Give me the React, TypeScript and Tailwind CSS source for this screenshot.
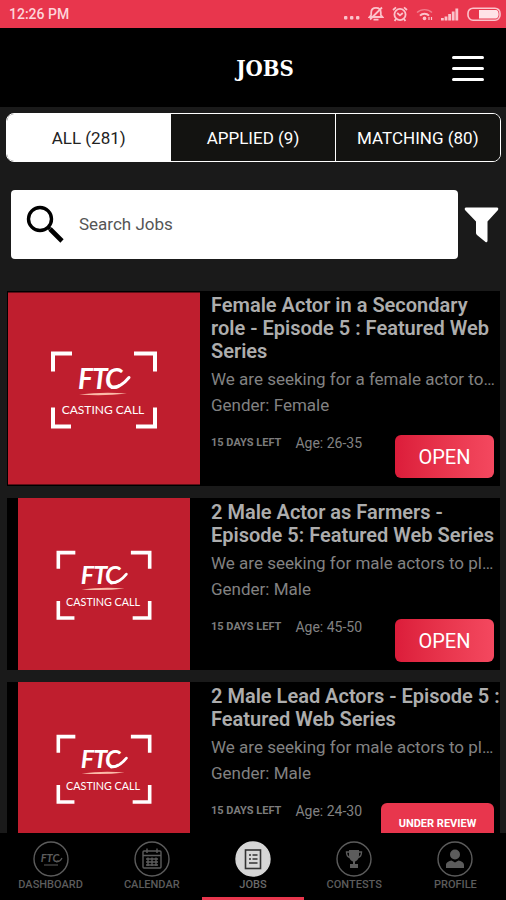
import { useState } from "react";

const tabs = ["ALL (281)", "APPLIED (9)", "MATCHING (80)"];

const jobs = [
  {
    title: "Female Actor in a Secondary role - Episode 5 : Featured Web Series",
    description: "We are seeking for a female actor to…",
    gender: "Female",
    age: "26-35",
    status: "open",
  },
  {
    title: "2 Male Actor as Farmers - Episode 5: Featured Web Series",
    description: "We are seeking for male actors to pl…",
    gender: "Male",
    age: "45-50",
    status: "open",
  },
  {
    title: "2 Male Lead Actors - Episode 5 : Featured Web Series",
    description: "We are seeking for male actors to pl…",
    gender: "Male",
    age: "24-30",
    status: "review",
  },
];

type Job = (typeof jobs)[number];

const StatusIcons = () => (
  <div className="flex items-center gap-2 text-[#fbc3cb]">
    {/* More */}
    <svg width="16" height="16" viewBox="0 0 16 16" fill="currentColor">
      <rect x="0" y="10" width="3.4" height="3.4" rx="1" />
      <rect x="6" y="10" width="3.4" height="3.4" rx="1" />
      <rect x="12" y="10" width="3.4" height="3.4" rx="1" />
    </svg>
    {/* Muted bell */}
    <svg width="16" height="16" viewBox="0 0 16 16" fill="none" stroke="currentColor" strokeWidth="1.8">
      <path d="M1.5 11 L3.2 9 V6.5 C3.2 3.4 5 1.8 8 1.8 C11 1.8 12.8 3.4 12.8 6.5 V9 L14.5 11 Z" />
      <path d="M5.5 13.6 H10.5 M2 13.5 L14 1.5" />
    </svg>
    {/* Alarm */}
    <svg width="16" height="16" viewBox="0 0 16 16" fill="none" stroke="currentColor" strokeWidth="1.8">
      <circle cx="8" cy="8.5" r="5.6" />
      <path d="M5.2 7 L8 9.4 L10.8 7 M1 4 L4 1.4 M15 4 L12 1.4 M4 13 L2.6 15 M12 13 L13.4 15" />
    </svg>
    {/* Wifi */}
    <svg width="17" height="16" viewBox="0 0 17 16" fill="none" stroke="currentColor">
      <path d="M1 6.6 C5 2.6 12 2.6 16 6.6" strokeWidth="1.4" opacity="0.5" />
      <path d="M4 9.6 C6.4 7.2 10.6 7.2 13 9.6" strokeWidth="2" />
      <circle cx="8.5" cy="12.4" r="1.8" fill="currentColor" stroke="none" />
      <path d="M13 11 V14 M15.5 11 V14" strokeWidth="1.2" />
    </svg>
    {/* Signal */}
    <svg width="18" height="16" viewBox="0 0 18 16" fill="currentColor">
      <rect x="0" y="12" width="2.8" height="2.5" />
      <rect x="3.6" y="10.5" width="2.8" height="4" />
      <rect x="7.2" y="8" width="2.8" height="6.5" />
      <rect x="10.8" y="5.5" width="2.8" height="9" />
      <rect x="14.4" y="2.5" width="2.8" height="12" />
    </svg>
    {/* Battery */}
    <svg width="34" height="16" viewBox="0 0 34 16">
      <rect x="1" y="2.2" width="32" height="12" rx="5" fill="none" stroke="currentColor" strokeWidth="1.6" />
      <path d="M12 4 H29 C32.5 4 32.5 12.4 29 12.4 H12 Z" fill="#ffe3e7" />
    </svg>
  </div>
);

const CastingLogo = () => (
  <svg viewBox="0 0 192 192" className="h-0 min-h-full w-full" role="img" aria-label="FTC Casting Call">
    <rect width="192" height="192" fill="#bf1e2e" />
    <path
      d="M45 79 V61 H64 M126 61 H147 V79 M45 115 V134 H63 M128 134 H147 V115"
      fill="none"
      stroke="#fff"
      strokeWidth="4"
    />
    <text y="96" x="70 84 97" fill="#fff" className="font-['Lato'] text-[28px] font-bold italic">
      FTC
    </text>
    {/* Flourish and underline */}
    <path d="M104 95 C111 95 117 90 121 85" fill="none" stroke="#fff" strokeWidth="3" strokeLinecap="round" />
    <path d="M71 102 Q95 99 119 101 Q95 104 71 102 Z" fill="#fbb9a8" />
    <text x="95" y="121" textAnchor="middle" fill="#fff" className="font-['Lato'] text-[12px]">
      CASTING CALL
    </text>
  </svg>
);

const JobCard = ({ job }: { job: Job }) => (
  <article className="flex shrink-0 bg-black">
    <div className="flex w-[194px] shrink-0 px-px">
      <CastingLogo />
    </div>
    <div className="flex min-w-0 flex-1 flex-col pt-[3px] pb-2 pl-[10px]">
      <h2 className="-mr-1 text-[20px] leading-[23px] font-semibold text-[#adadad]">{job.title}</h2>
      <p className="mt-[3px] text-[17px] leading-[26px] whitespace-nowrap text-[#828282]">{job.description}</p>
      <p className="text-[17px] leading-[26px] text-[#828282]">Gender: {job.gender}</p>
      <div className="mt-[17px] flex items-start pr-[6px]">
        <span className="text-[11px] leading-4 font-bold whitespace-nowrap text-[#7c7c7c]">15 DAYS LEFT</span>
        <span className="ml-[14px] text-[14px] leading-4 whitespace-nowrap text-[#828282]">Age: {job.age}</span>
        {job.status === "open" ? (
          <button className="ml-auto h-[43px] w-[99px] rounded-md bg-linear-to-r from-[#dc1c3a] to-[#f4485f] text-[20px] text-white">
            OPEN
          </button>
        ) : (
          <button className="ml-auto h-[43px] w-[113px] rounded-md bg-[#e8364d] text-[11px] font-bold text-white">
            UNDER REVIEW
          </button>
        )}
      </div>
    </div>
  </article>
);

const navItems = [
  {
    label: "DASHBOARD",
    icon: (
      <>
        <text x="17" y="21" textAnchor="middle" fill="currentColor" className="font-['Lato'] text-[11px] font-bold italic">
          FTC
        </text>
        <path d="M23 21 C26 21 28 19 29 17 M11 24 H25" fill="none" stroke="currentColor" strokeWidth="1.2" />
      </>
    ),
  },
  {
    label: "CALENDAR",
    icon: (
      <g fill="none" stroke="currentColor" strokeWidth="1.4">
        <rect x="9" y="10" width="18" height="17" rx="1" />
        <path d="M9 14.5 H27 M13 7.5 V12 M23 7.5 V12" />
        <path d="M12 18 H24 M12 21 H24 M12 24 H24 M14 16.5 V25 M18 16.5 V25 M22 16.5 V25" />
      </g>
    ),
  },
  {
    label: "JOBS",
    icon: (
      <g fill="none" stroke="#333" strokeWidth="1.6">
        <rect x="10.5" y="9" width="15" height="18.5" />
        <path d="M14 14 H16 M17.5 14 H22.5 M14 18 H16 M17.5 18 H22.5 M14 22 H22.5" />
      </g>
    ),
  },
  {
    label: "CONTESTS",
    icon: (
      <g>
        <path d="M13 9 H23 V14 C23 18 21 20 19 20.5 V23 H22 V27 H14 V23 H17 V20.5 C15 20 13 18 13 14 Z" fill="currentColor" />
        <path d="M13 11 H10.5 C10.5 14.5 11.5 16 14 16.5 M23 11 H25.5 C25.5 14.5 24.5 16 22 16.5" fill="none" stroke="currentColor" strokeWidth="1.4" />
      </g>
    ),
  },
  {
    label: "PROFILE",
    icon: (
      <g fill="currentColor">
        <circle cx="18" cy="13.5" r="5" />
        <path d="M9 27 V24 C9 21.5 12 20 14.5 19.5 L18 21.5 L21.5 19.5 C24 20 27 21.5 27 24 V27 Z" />
      </g>
    ),
  },
];

export default function App() {
  const [activeTab, setActiveTab] = useState(0);
  const [query, setQuery] = useState("");

  return (
    <div className="flex h-screen flex-col overflow-hidden bg-[#1a1a1a] font-['Roboto',sans-serif]">
      <div className="flex h-7 shrink-0 items-center justify-between bg-[#e8364d] pr-[5px] pl-[9px]">
        <span className="text-[14px] font-medium text-[#fdd5da]">12:26 PM</span>
        <StatusIcons />
      </div>

      <header className="grid h-[79px] shrink-0 grid-cols-[1fr_auto_1fr] items-center bg-black pt-0.5 pr-[22px] pl-[46px]">
        <h1 className="col-start-2 font-['Roboto_Slab','DejaVu_Serif_Condensed','DejaVu_Serif',serif] text-[22px] font-bold text-white">
          JOBS
        </h1>
        <button aria-label="Menu" className="flex w-8 flex-col gap-2 justify-self-end">
          <span className="h-[3px] rounded-full bg-white" />
          <span className="h-[3px] rounded-full bg-white" />
          <span className="h-[3px] rounded-full bg-white" />
        </button>
      </header>

      <div className="mt-[6px] mr-[5px] ml-[6px] grid h-[49px] shrink-0 grid-cols-3 divide-x divide-white overflow-hidden rounded-lg border border-white">
        {tabs.map((tab, i) => (
          <button
            key={tab}
            onClick={() => setActiveTab(i)}
            className={`pt-0.5 text-[17px] ${i === activeTab ? "bg-white text-[#222]" : "bg-[#131311] text-white"}`}
          >
            {tab}
          </button>
        ))}
      </div>

      <div className="mt-7 flex shrink-0 items-center gap-[6px] pr-[7px] pl-[11px]">
        <label className="flex h-[69px] min-w-0 flex-1 items-center gap-[14px] rounded-sm bg-white px-[15px]">
          <svg width="39" height="39" viewBox="0 0 39 39" fill="none" stroke="#000">
            <circle cx="14" cy="14" r="11.5" strokeWidth="3.4" />
            <path d="M22 22 L24 24" strokeWidth="3.4" />
            <path d="M24 24 L36 36" strokeWidth="4.6" />
          </svg>
          <input
            type="text"
            aria-label="Search Jobs"
            placeholder="Search Jobs"
            value={query}
            onChange={(e) => setQuery(e.target.value)}
            className="min-w-0 flex-1 text-[17px] text-[#333] outline-none placeholder:text-[#555]"
          />
        </label>
        <button aria-label="Filter">
          <svg width="35" height="36" viewBox="0 0 35 36" fill="#fff">
            <path d="M2 0.5 H33 Q35 1 34 3 L23.5 14.5 V34 Q23 36 21.5 35 L13 28 Q12 27 12 26 V14.5 L1 3 Q0 1 2 0.5 Z" />
          </svg>
        </button>
      </div>

      <main className="mt-8 flex min-h-0 flex-1 flex-col gap-3 overflow-hidden pr-[6px] pl-[7px]">
        {jobs.map((job) => (
          <JobCard key={job.title} job={job} />
        ))}
      </main>

      <nav className="grid shrink-0 grid-cols-5 bg-black">
        {navItems.map((item) => {
          const active = item.label === "JOBS";
          return (
            <a
              key={item.label}
              href={`#${item.label.toLowerCase()}`}
              className={`flex flex-col items-center border-b-[3px] pt-2 pb-1 ${active ? "border-[#e8364d] text-[#6a6a6a]" : "border-transparent text-[#5c5c5c]"}`}
            >
              <svg width="36" height="36" viewBox="0 0 36 36">
                <circle
                  cx="18"
                  cy="18"
                  r="17"
                  fill={active ? "#d6d6d6" : "none"}
                  stroke={active ? "#d6d6d6" : "currentColor"}
                  strokeWidth="1.4"
                />
                {item.icon}
              </svg>
              <span className="text-[11px] leading-4 font-medium">{item.label}</span>
            </a>
          );
        })}
      </nav>
    </div>
  );
}
